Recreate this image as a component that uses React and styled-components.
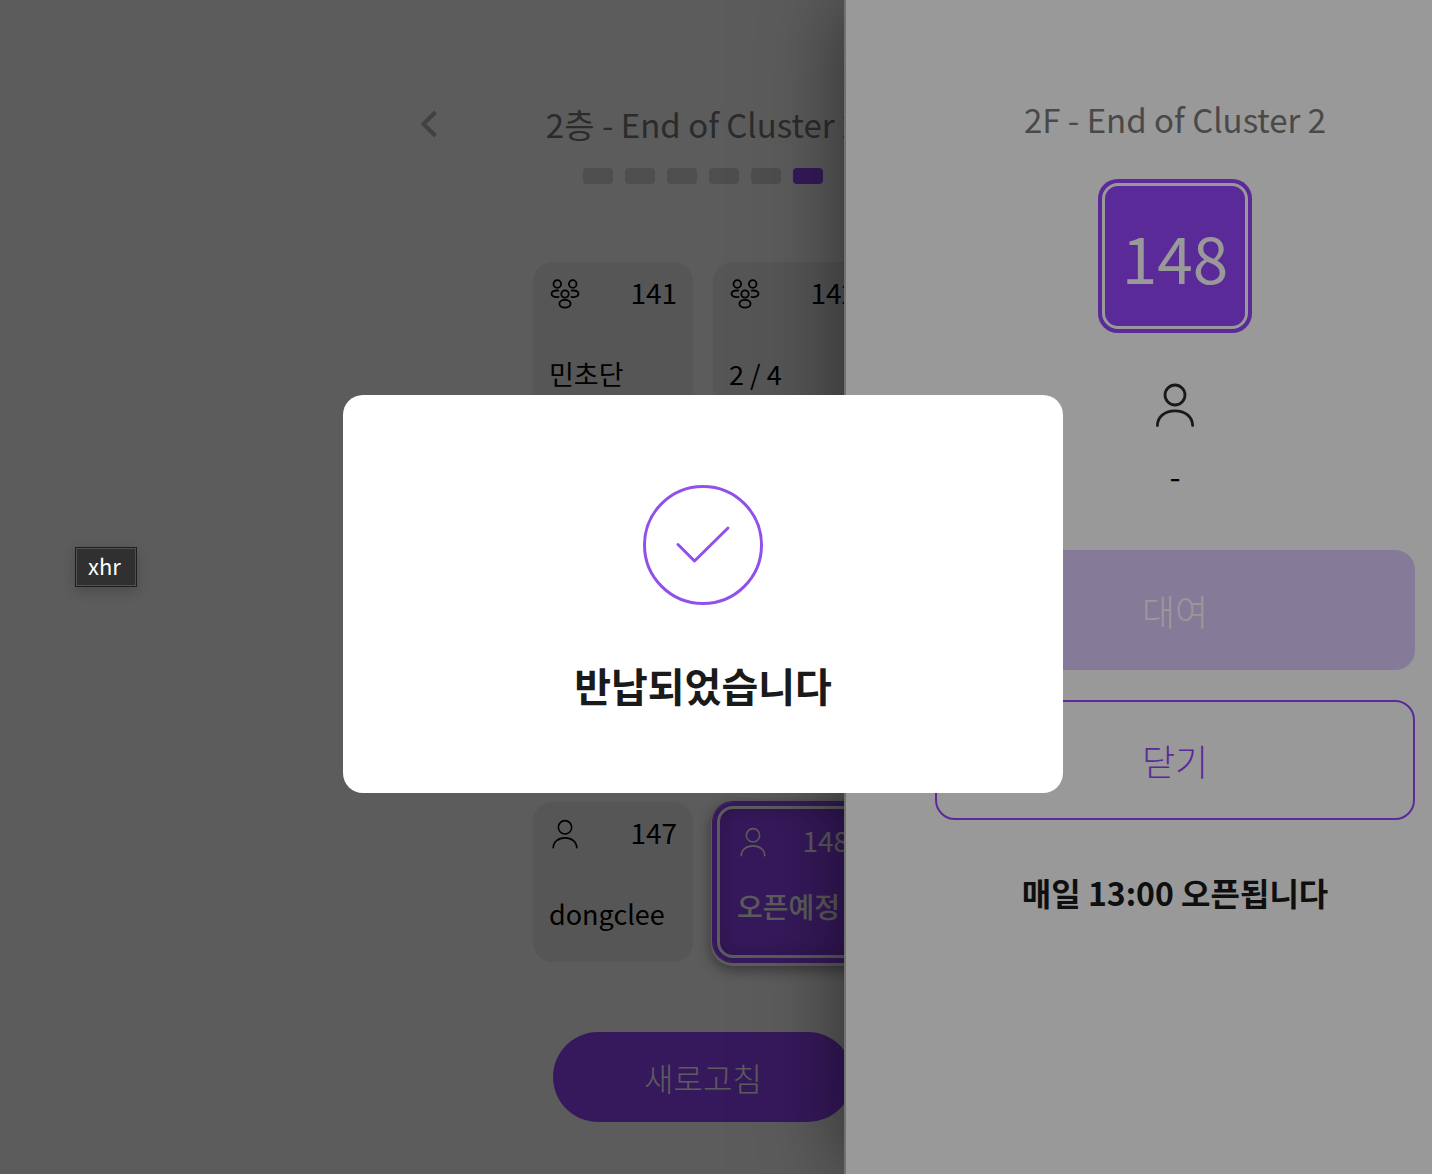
import React from "react";
import styled, { createGlobalStyle, css } from "styled-components";

const sections = [1, 2, 3, 4, 5, 6];

const lockers = [
  { id: 1, num: "141", name: "민초단", type: "share" },
  { id: 2, num: "142", name: "2 / 4", type: "share" },
  { id: 3 },
  { id: 4 },
  { id: 5 },
  { id: 6 },
  { id: 7, num: "147", name: "dongclee", type: "private" },
  { id: 8, num: "148", name: "오픈예정", type: "private", selected: true },
];

const PrivateIcon = ({ size, stroke = 1 }) => (
  <svg width={size} height={size} viewBox="0 0 24 24" fill="none" stroke="currentColor" strokeWidth={stroke} strokeLinecap="round">
    <circle cx="12" cy="7" r="5" />
    <path d="M3.2 22.3C3.2 17.8 7 14.9 12 14.9S20.8 17.8 20.8 22.3" />
  </svg>
);

const ShareIcon = () => (
  <svg width="32" height="32" viewBox="0 0 32 32" fill="none" stroke="currentColor" strokeWidth="1.8" strokeLinecap="round">
    <circle cx="8.3" cy="6" r="3.8" />
    <circle cx="23.7" cy="6" r="3.8" />
    <circle cx="16" cy="16" r="3.7" />
    <ellipse cx="16" cy="25.7" rx="5.6" ry="3.9" />
    <path d="M9.3 12.6C5 12.2 2.5 13.4 2.5 15.8S5.5 19.6 9.5 18.9" />
    <path d="M22.7 12.6C27 12.2 29.5 13.4 29.5 15.8S26.5 19.6 22.5 18.9" />
  </svg>
);

const Locker = ({ item }) => (
  <Card $selected={item.selected}>
    {item.num && (
      <>
        <CardTop>
          {item.type === "share" ? <ShareIcon /> : <PrivateIcon size={32} stroke={1.2} />}
          <span>{item.num}</span>
        </CardTop>
        <CardName $selected={item.selected}>{item.name}</CardName>
      </>
    )}
  </Card>
);

const App = () => {
  return (
    <Page>
      <GlobalStyle />
      <Main>
        <Header>
          <BackButton type="button" aria-label="back">
            <svg width="18" height="28" viewBox="0 0 18 28" fill="none" stroke="#b8b8b8" strokeWidth="4">
              <path d="M15.5 2L3.5 14L15.5 26" />
            </svg>
          </BackButton>
          <Title>2층 - End of Cluster 2</Title>
        </Header>
        <Dots>
          {sections.map((s) => (
            <Dot key={s} $active={s === 6} />
          ))}
        </Dots>
        <Grid>
          {lockers.map((item) => (
            <Locker key={item.id} item={item} />
          ))}
        </Grid>
        <RefreshButton type="button">새로고침</RefreshButton>
      </Main>
      <Scrim />
      <Drawer>
        <Title as="h2">2F - End of Cluster 2</Title>
        <BigNumber>148</BigNumber>
        <UserIcon>
          <PrivateIcon size={48} stroke={1.4} />
        </UserIcon>
        <UserName>-</UserName>
        <ActionButton type="button" disabled>대여</ActionButton>
        <ActionButton type="button" $line>닫기</ActionButton>
        <Notice>매일 13:00 오픈됩니다</Notice>
      </Drawer>
      <ModalLayer>
        <Modal role="dialog" aria-labelledby="modal-title">
          <svg width="120" height="120" viewBox="0 0 120 120" fill="none" stroke="#9150ea" strokeWidth="3" strokeLinecap="round" strokeLinejoin="round">
            <circle cx="60" cy="60" r="58.5" />
            <path d="M35 59.5L51.5 76L85 43" />
          </svg>
          <ModalTitle id="modal-title">반납되었습니다</ModalTitle>
        </Modal>
      </ModalLayer>
      <Tooltip role="tooltip">xhr</Tooltip>
    </Page>
  );
};

const GlobalStyle = createGlobalStyle`
  * {
    box-sizing: border-box;
  }
  body {
    margin: 0;
    background: #fff;
    color: #000;
    font-family: "Noto Sans CJK KR", "Noto Sans", sans-serif;
    font-size: 28px;
  }
  button {
    font-family: inherit;
    padding: 0;
    border: none;
    background: none;
  }
`;

const Page = styled.div`
  position: relative;
  min-height: 100vh;
  overflow: hidden;
`;

const Main = styled.main`
  display: flex;
  flex-direction: column;
  align-items: center;
  padding: 100px 26px 52px 0;
`;

const Header = styled.header`
  display: grid;
  grid-template-columns: 1fr auto 1fr;
  align-items: center;
  width: 566px;
`;

const BackButton = styled.button`
  justify-self: start;
  display: flex;
`;

const Title = styled.h1`
  margin: 0;
  font-size: 33px;
  line-height: 48px;
  font-weight: 400;
  color: #7b7b7b;
  white-space: nowrap;
`;

const Dots = styled.div`
  display: flex;
  gap: 12px;
  margin-top: 20px;
`;

const Dot = styled.span`
  width: 30px;
  height: 16px;
  border-radius: 4px;
  background: ${({ $active }) => ($active ? "#9747ff" : "#d9d9d9")};
`;

const Grid = styled.section`
  display: grid;
  grid-template-columns: repeat(2, 160px);
  grid-auto-rows: 160px;
  gap: 20px;
  margin-top: 78px;
`;

const Card = styled.div`
  display: flex;
  flex-direction: column;
  justify-content: space-between;
  padding: 14px 16px 28px;
  border-radius: 20px;
  background: #eee;
  ${({ $selected }) =>
    $selected &&
    css`
      padding: 22px 24px 36px;
      color: #fff;
      background: #9747ff;
      box-shadow: inset 0 0 0 4px #9747ff, inset 0 0 0 7px #fff,
        inset 0 0 20px 8px rgba(0, 0, 0, 0.2), 0 0 0 1px #9747ff,
        0 2px 0 2px #fff, 0 6px 14px 2px rgba(0, 0, 0, 0.4);
    `}
`;

const CardTop = styled.div`
  display: flex;
  justify-content: space-between;
  align-items: center;
  line-height: 32px;
  span {
    padding-bottom: 4px;
  }
`;

const CardName = styled.p`
  margin: 0;
  font-size: ${({ $selected }) => ($selected ? "28px" : "27px")};
  font-weight: ${({ $selected }) => ($selected ? 500 : 400)};
  line-height: 40px;
  white-space: nowrap;
`;

const RefreshButton = styled.button`
  width: 300px;
  height: 90px;
  margin-top: 70px;
  border-radius: 45px;
  background: #9747ff;
  color: #fff;
  font-size: 32px;
  font-weight: 300;
`;

const Scrim = styled.div`
  position: absolute;
  inset: 0;
  background: rgba(0, 0, 0, 0.4);
`;

const Drawer = styled.aside`
  position: absolute;
  top: 0;
  bottom: 0;
  right: -72px;
  width: 660px;
  display: flex;
  flex-direction: column;
  align-items: center;
  padding-top: 95px;
  background: #fff;
  box-shadow: 0 0 80px rgba(0, 0, 0, 0.5);
  border-left: 2px solid #bcbcbc;
`;

const BigNumber = styled.div`
  display: flex;
  align-items: center;
  justify-content: center;
  flex-shrink: 0;
  width: 154px;
  height: 154px;
  margin: 36px 0 48px;
  border-radius: 20px;
  background: #9747ff;
  box-shadow: inset 0 0 0 4px #9747ff, inset 0 0 0 7px #fff;
  color: #fff;
  font-size: 64px;
`;

const UserIcon = styled.div`
  display: flex;
  color: #2b2b2b;
`;

const UserName = styled.p`
  margin: 23px 0 52px;
  font-size: 32px;
  line-height: 46px;
`;

const ActionButton = styled.button`
  flex-shrink: 0;
  width: 480px;
  height: 120px;
  margin-bottom: 30px;
  border-radius: 20px;
  background: #9747ff;
  color: #fff;
  font-size: 36px;
  font-weight: 300;
  &:disabled {
    background: #dfcbff;
  }
  ${({ $line }) =>
    $line &&
    css`
      background: #fff;
      border: 2px solid #9747ff;
      color: #9747ff;
    `}
`;

const Notice = styled.p`
  margin: 18px 0 0;
  font-size: 32px;
  line-height: 48px;
  font-weight: 700;
  color: #1a1a1a;
`;

const ModalLayer = styled.div`
  position: absolute;
  inset: 0;
  display: flex;
  align-items: center;
  justify-content: center;
  padding: 14px 26px 0 0;
  background: rgba(0, 0, 0, 0.4);
`;

const Modal = styled.div`
  display: flex;
  flex-direction: column;
  align-items: center;
  width: 720px;
  padding: 90px 0 78px;
  border-radius: 20px;
  background: #fff;
`;

const ModalTitle = styled.h2`
  margin: 50px 0 0;
  font-size: 40px;
  line-height: 60px;
  font-weight: 700;
  color: #1a1a1a;
`;

const Tooltip = styled.div`
  position: absolute;
  left: 75px;
  top: 547px;
  padding: 0 15px 4px 12px;
  border: 1px solid #1f1f1f;
  box-shadow: inset 0 0 0 1px #505050, 0 4px 12px rgba(0, 0, 0, 0.2);
  background: #303030;
  color: #fff;
  font-size: 22px;
  line-height: 34px;
`;

export default App;
